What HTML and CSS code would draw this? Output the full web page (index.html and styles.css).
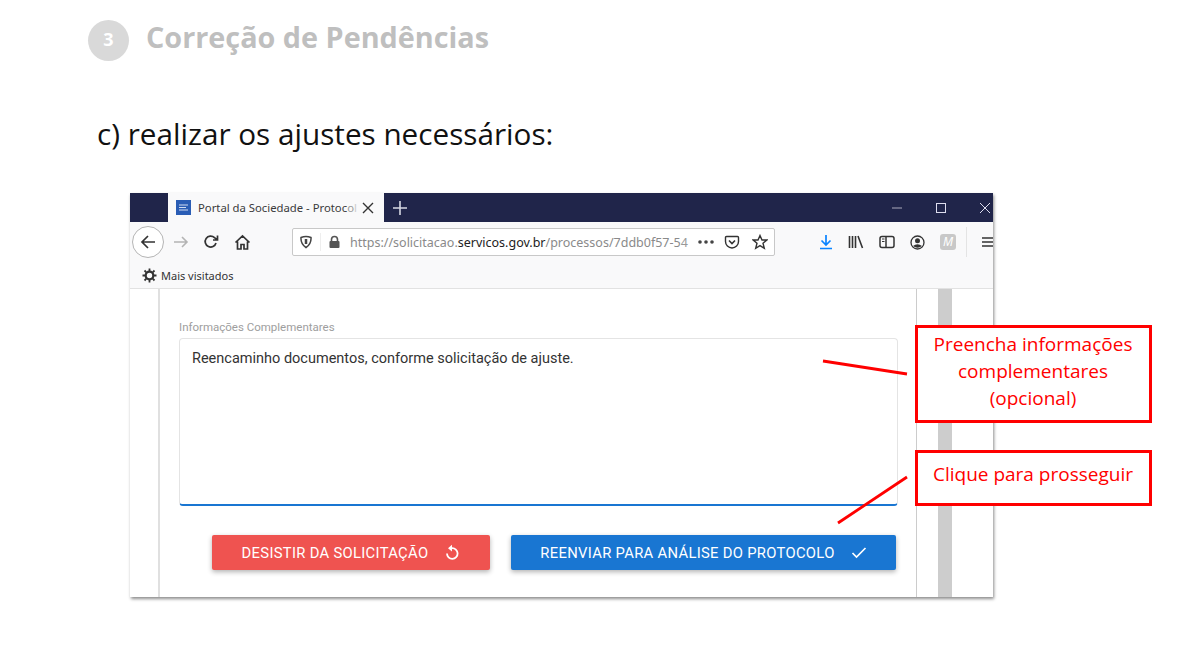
FILE: index.html
```html
<!DOCTYPE html>
<html lang="pt-BR">
<head>
  <meta charset="UTF-8">
  <title>Correção de Pendências</title>
  <link rel="stylesheet" href="styles.css">
</head>
<body>
<div class="slide">

  <!-- Header -->
  <div class="step-header">
    <div class="step-num">3</div>
    <div class="step-title">Correção de Pendências</div>
  </div>
  <p class="step-text">c) realizar os ajustes necessários:</p>

  <!-- Browser screenshot -->
  <div class="browser">
    <div class="tabbar">
      <div class="tab">
        <svg class="favicon" width="15" height="15" viewBox="0 0 15 15"><rect width="15" height="15" fill="#2a5db5"/><path d="M3 5H12M3 7.500H10M3 10H12" stroke="#cfdcf2" stroke-width="1"/></svg>
        <span class="tab-title">Portal da Sociedade - Protoc<span class="fade-1">o</span><span class="fade-2">l</span></span>
        <svg class="tab-close" width="12" height="12" viewBox="0 0 12 12"><path d="M1 1L11 11M11 1L1 11" stroke="#333" stroke-width="1.4"/></svg>
      </div>
      <svg class="tab-new" width="16" height="16" viewBox="0 0 16 16"><path d="M8 1V15M1 8H15" stroke="#d5d7e2" stroke-width="1.6"/></svg>
      <div class="win-btns">
        <svg width="12" height="12" viewBox="0 0 12 12"><path d="M1 6H11" stroke="#aab" stroke-width="1"/></svg>
        <svg width="12" height="12" viewBox="0 0 12 12"><rect x="1.5" y="1.5" width="9" height="9" fill="none" stroke="#dde" stroke-width="1"/></svg>
        <svg width="12" height="12" viewBox="0 0 12 12"><path d="M1 1L11 11M11 1L1 11" stroke="#dde" stroke-width="1"/></svg>
      </div>
    </div>

    <div class="toolbar">
      <div class="back-btn">
        <svg width="18" height="18" viewBox="0 0 18 18"><path d="M16 9H3M9 3L3 9L9 15" fill="none" stroke="#333" stroke-width="1.7"/></svg>
      </div>
      <svg class="nav-icon" width="18" height="18" viewBox="0 0 18 18"><path d="M2 9H15M10 4L15 9L10 14" fill="none" stroke="#b4b4b4" stroke-width="1.6"/></svg>
      <svg class="nav-icon" width="16" height="16" viewBox="0 0 16 16"><path d="M13 9A5.5 5.5 0 1 1 11.5 3.6L14 5.5M14.500 1.500V6H10" fill="none" stroke="#333" stroke-width="1.7"/></svg>
      <svg class="nav-icon home-icon" width="17" height="17" viewBox="0 0 17 17"><path d="M1.500 8.500L8.500 2L15.500 8.500M3.500 7.500V15H7V10.500H10V15H13.500V7.500" fill="none" stroke="#333" stroke-width="1.7"/></svg>

      <div class="urlbar">
        <svg width="14" height="14" viewBox="0 0 14 14"><path d="M2 2.500Q7 0.500 12 2.500Q12.500 9 7 12.500Q1.500 9 2 2.500Z" fill="none" stroke="#444" stroke-width="1.500"/><path d="M7 4V9" stroke="#444" stroke-width="2.500"/></svg>
        <span class="url-sep"></span>
        <svg width="13" height="14" viewBox="0 0 13 14"><path d="M3.500 6V4.500A3 3 0 0 1 9.500 4.500V6" fill="none" stroke="#555" stroke-width="1.600"/><rect x="1.500" y="6" width="10" height="7" rx="1" fill="#555"/></svg>
        <span class="url-text">https://solicitacao.<b>servicos.gov.br</b>/processos/7ddb0f57-5<span class="fade-1">4</span></span>
        <svg class="url-dots" width="18" height="6" viewBox="0 0 18 6"><circle cx="3" cy="3" r="1.800" fill="#444"/><circle cx="9" cy="3" r="1.800" fill="#444"/><circle cx="15" cy="3" r="1.800" fill="#444"/></svg>
        <svg class="url-pocket" width="16" height="15" viewBox="0 0 16 15"><path d="M1.500 2.500Q1.500 1.500 2.500 1.500H13.500Q14.500 1.500 14.500 2.500V6.500A6.500 6.500 0 0 1 1.500 6.500Z" fill="none" stroke="#333" stroke-width="1.400"/><path d="M5 5.500L8 8.500L11 5.500" fill="none" stroke="#333" stroke-width="1.600"/></svg>
        <svg class="url-star" width="16" height="16" viewBox="0 0 16 16"><path d="M8 1.500L10 6H14.800L11 9.300L12.300 14.300L8 11.600L3.700 14.300L5 9.300L1.200 6H6Z" fill="none" stroke="#333" stroke-width="1.400"/></svg>
      </div>

      <div class="tool-icons">
        <svg width="14" height="16" viewBox="0 0 14 16"><path d="M7 1V11M2.500 6.500L7 11L11.500 6.500M1 14.500H13" fill="none" stroke="#0a84ff" stroke-width="1.700"/></svg>
        <svg width="16" height="14" viewBox="0 0 16 14"><path d="M1.500 1V13M4.500 1V13M7.500 1V13M10 1L14.500 13" fill="none" stroke="#333" stroke-width="1.600"/></svg>
        <svg width="16" height="14" viewBox="0 0 16 14"><rect x="1" y="1.500" width="14" height="11" rx="2" fill="none" stroke="#333" stroke-width="1.500"/><path d="M7 2V12" stroke="#333" stroke-width="1.500"/><path d="M3 4H5.500M3 6.500H5.500" stroke="#333" stroke-width="1.200"/></svg>
        <svg width="15" height="15" viewBox="0 0 15 15"><circle cx="7.500" cy="7.500" r="6.500" fill="none" stroke="#333" stroke-width="1.300"/><circle cx="7.500" cy="5.700" r="2.500" fill="#333"/><path d="M3 11Q7.500 7.500 12 11Q7.500 14.500 3 11Z" fill="#333"/></svg>
        <span class="ext-icon">M</span>
        <span class="tool-sep"></span>
        <svg class="menu-icon" width="11" height="12" viewBox="0 0 11 12"><path d="M0 2H11M0 6H11M0 10H11" stroke="#333" stroke-width="1.600"/></svg>
      </div>
    </div>

    <div class="bookmarks">
      <svg width="15" height="15" viewBox="0 0 15 15"><circle cx="7.500" cy="7.500" r="3.800" fill="none" stroke="#333" stroke-width="2.200"/><path d="M7.500 0.500V3M7.500 12V14.500M0.500 7.500H3M12 7.500H14.500M2.500 2.500L4.300 4.300M10.700 10.700L12.500 12.500M12.500 2.500L10.700 4.300M4.300 10.700L2.500 12.500" stroke="#333" stroke-width="1.800"/></svg>
      <span>Mais visitados</span>
    </div>

    <div class="page">
      <div class="page-main">
        <label class="field-label">Informações Complementares</label>
        <div class="field-box">Reencaminho documentos, conforme solicitação de ajuste.</div>
        <div class="actions">
          <button class="btn btn-red">DESISTIR DA SOLICITAÇÃO
            <svg width="16" height="17" viewBox="0 0 16 17"><path d="M3 9.500A5.300 5.300 0 1 0 8 4.200H5.500" fill="none" stroke="#fff" stroke-width="1.800"/><path d="M8 0.800L4 4.200L8 7.600Z" fill="#fff"/></svg>
          </button>
          <button class="btn btn-blue">REENVIAR PARA ANÁLISE DO PROTOCOLO
            <svg width="16" height="13" viewBox="0 0 16 13"><path d="M1.500 7L5.500 11L14.500 2" fill="none" stroke="#fff" stroke-width="1.700"/></svg>
          </button>
        </div>
      </div>
      <div class="page-side"><span class="scroll-strip"></span></div>
    </div>
  </div>

  <!-- Callouts -->
  <div class="callout callout-info">Preencha informações complementares (opcional)</div>
  <div class="callout callout-next">Clique para prosseguir</div>
  <svg class="callout-lines" width="1183" height="659" viewBox="0 0 1183 659">
    <path d="M823 361L907 374M907 477L838 523" stroke="#f00" stroke-width="2.800"/>
  </svg>

</div>
</body>
</html>
```

FILE: styles.css
```css
body {
  margin: 0;
  background: white;
}
.slide {
  position: relative;
  width: 1183px;
  height: 659px;
  overflow: hidden;
  padding: 20px 0 0 88px;
  box-sizing: border-box;
  font-family: "Open Sans", sans-serif;
}

/* Header */
.step-header {
  display: flex;
  align-items: center;
  gap: 17px;
  height: 41px;
}
.step-num {
  width: 41px;
  height: 41px;
  border-radius: 50%;
  background: #d9d9d9;
  color: white;
  font-weight: bold;
  font-size: 18px;
  display: flex;
  align-items: center;
  justify-content: center;
  padding-bottom: 4px;
  box-sizing: border-box;
}
.step-title {
  color: #bfbfbf;
  font-weight: bold;
  font-size: 28.800px;
  position: relative;
  top: -4px;
}
.step-text {
  margin: 52px 0 0 9px;
  font-size: 29.700px;
  line-height: 42px;
  color: #111;
}

/* Browser */
.browser {
  width: 863px;
  height: 404px;
  margin: 38px 0 0 42px;
  background: white;
  box-shadow: 1px 2px 3px rgba(0,0,0,0.45);
  display: flex;
  flex-direction: column;
  font-family: "Noto Sans", sans-serif;
}
.tabbar {
  height: 29px;
  background: #20254a;
  display: flex;
  align-items: center;
  flex-shrink: 0;
}
.tab {
  width: 216px;
  height: 29px;
  margin-left: 38px;
  background: #f9f9fa;
  display: flex;
  align-items: center;
  box-sizing: border-box;
  padding-left: 8px;
}
.favicon {
  flex-shrink: 0;
}
.tab-title {
  margin-left: 7px;
  width: 164px;
  font-size: 11.300px;
  color: #3a3a3a;
  white-space: nowrap;
}
.fade-1 {
  color: #999;
}
.fade-2 {
  color: #ccc;
}
.tab-close {
  flex-shrink: 0;
}
.tab-new {
  margin-left: 8px;
}
.win-btns {
  margin-left: auto;
  display: flex;
  gap: 32px;
  padding-right: 2px;
}
.toolbar {
  height: 40px;
  background: #f9f9fa;
  display: flex;
  align-items: center;
  padding-left: 2px;
  flex-shrink: 0;
}
.back-btn {
  width: 32px;
  height: 32px;
  border: 1px solid #b5b5b5;
  border-radius: 50%;
  background: white;
  box-sizing: border-box;
  display: flex;
  align-items: center;
  justify-content: center;
}
.nav-icon {
  margin-left: 8px;
}
.nav-icon + .nav-icon {
  margin-left: 13px;
}
.nav-icon + .home-icon {
  margin-left: 15px;
}
.urlbar {
  margin-left: 41px;
  width: 483px;
  height: 28px;
  border: 1px solid #c8c8c8;
  border-radius: 2px;
  background: white;
  box-sizing: border-box;
  display: flex;
  align-items: center;
  padding: 0 6px;
}
.url-sep {
  width: 1px;
  height: 18px;
  margin: 0 7px;
  background: #eee;
}
.url-text {
  margin-left: 9px;
  width: 338px;
  font-size: 12.500px;
  color: #8a8a8a;
  white-space: nowrap;
}
.url-text b {
  font-weight: normal;
  color: #222;
}
.url-dots {
  margin-left: 9px;
}
.url-pocket {
  margin-left: 9px;
}
.url-star {
  margin-left: 12px;
}
.tool-icons {
  margin-left: 44px;
  display: flex;
  align-items: center;
  gap: 15px;
}
.ext-icon {
  width: 16px;
  height: 16px;
  border-radius: 3px;
  background: #c8c8c8;
  color: white;
  font-size: 12px;
  font-style: italic;
  line-height: 16px;
  text-align: center;
}
.tool-sep {
  width: 1px;
  height: 30px;
  background: #e4e4e4;
  margin-left: -5px;
}
.menu-icon {
  margin-left: 0;
}
.bookmarks {
  height: 26px;
  background: #f9f9fa;
  border-bottom: 1px solid #e2e2e2;
  display: flex;
  align-items: center;
  gap: 4px;
  padding-left: 12px;
  font-size: 11px;
  color: #333;
  flex-shrink: 0;
}

/* Page content */
.page {
  flex: 1;
  display: flex;
  font-family: Roboto, sans-serif;
}
.page-main {
  width: 759px;
  margin-left: 28px;
  border-left: 2px solid #e0e0e0;
  border-right: 1px solid #ccc;
  box-sizing: border-box;
  padding: 32px 18px 0 19px;
}
.field-label {
  display: block;
  font-size: 11.500px;
  line-height: 13px;
  color: #9e9e9e;
}
.field-box {
  height: 168px;
  margin-top: 4px;
  box-sizing: border-box;
  border: 1px solid #e4e4e4;
  border-bottom: 2px solid #1976d2;
  border-radius: 4px;
  padding: 11px 12px;
  font-size: 14.500px;
  line-height: 18px;
  color: #333;
}
.actions {
  display: flex;
  gap: 21px;
  margin: 29px 0 0 33px;
}
.btn {
  height: 35px;
  border: none;
  border-radius: 2px;
  color: white;
  font-family: Roboto, sans-serif;
  font-size: 14.800px;
  letter-spacing: 0.300px;
  display: flex;
  align-items: center;
  justify-content: center;
  box-shadow: 0 2px 5px rgba(0,0,0,0.3);
}
.btn-red {
  width: 278px;
  background: #ef5350;
  gap: 16px;
}
.btn-blue {
  width: 385px;
  background: #1976d2;
  gap: 16px;
}
.page-side {
  flex: 1;
  padding-left: 21px;
}
.scroll-strip {
  display: block;
  width: 14px;
  height: 100%;
  background: #cdcdcd;
}

/* Callouts */
.callout {
  position: absolute;
  left: 914.500px;
  width: 237px;
  box-sizing: border-box;
  border: 3px solid #f00;
  background: white;
  color: #f00;
  font-size: 19px;
  line-height: 27px;
  text-align: center;
  padding: 3px 8px;
}
.callout-info {
  top: 324.500px;
  height: 98px;
}
.callout-next {
  top: 449.500px;
  height: 56px;
  padding-top: 8px;
}
.callout-lines {
  position: absolute;
  left: 0;
  top: 0;
  pointer-events: none;
}
```
